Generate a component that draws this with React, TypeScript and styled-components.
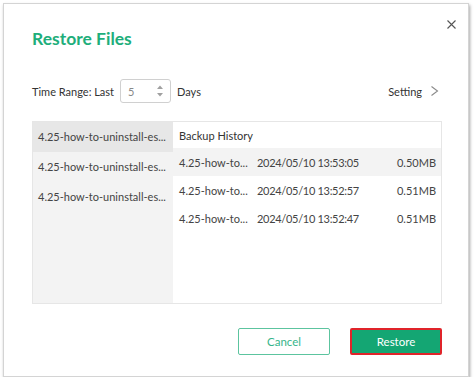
import { FC } from "react";
import styled, { createGlobalStyle } from "styled-components";

const GlobalStyle = createGlobalStyle`
  html, body {
    margin: 0;
    padding: 0;
    background: #ffffff;
  }
  body {
    font-family: Lato, "Open Sans", sans-serif;
    color: #333333;
  }
`;

type BackupRow = {
  name: string;
  date: string;
  size: string;
};

const sources = [
  "4.25-how-to-uninstall-es...",
  "4.25-how-to-uninstall-es...",
  "4.25-how-to-uninstall-es...",
];

const rows: BackupRow[] = [
  { name: "4.25-how-to...", date: "2024/05/10 13:53:05", size: "0.50MB" },
  { name: "4.25-how-to...", date: "2024/05/10 13:52:57", size: "0.51MB" },
  { name: "4.25-how-to...", date: "2024/05/10 13:52:47", size: "0.51MB" },
];

const App: FC = () => (
  <>
    <GlobalStyle />
    <Dialog>
      <CloseButton aria-label="Close">
        <svg width="9" height="9" viewBox="0 0 9 9">
          <path d="M0.5 0.5 L8.5 8.5 M8.5 0.5 L0.5 8.5" stroke="#555" strokeWidth="1.1" fill="none" />
        </svg>
      </CloseButton>
      <Title>Restore Files</Title>
      <Toolbar>
        <Label>Time Range: Last</Label>
        <NumberBox>
          <NumberValue>5</NumberValue>
          <Spinner>
            <svg width="8" height="16" viewBox="0 0 8 16">
              <path d="M1 6 L4 2.5 L7 6 Z" fill="#a0a0a0" />
              <path d="M1 10 L4 13.5 L7 10 Z" fill="#a0a0a0" />
            </svg>
          </Spinner>
        </NumberBox>
        <Label>Days</Label>
        <SettingLink>
          Setting
          <svg width="9" height="14" viewBox="0 0 9 14">
            <path d="M1.5 2.5 L7.5 7 L1.5 11.5" stroke="#8a8a8a" strokeWidth="1.1" fill="none" />
          </svg>
        </SettingLink>
      </Toolbar>
      <Panels>
        <SourceList>
          {sources.map((src, idx) => (
            <SourceItem key={`src-${idx}`} active={idx === 0}>{src}</SourceItem>
          ))}
        </SourceList>
        <History>
          <HistoryHeader>Backup History</HistoryHeader>
          {rows.map((row, idx) => (
            <HistoryRow key={`row-${idx}`} active={idx === 0}>
              <Cell>{row.name}</Cell>
              <DateCell>{row.date}</DateCell>
              <SizeCell>{row.size}</SizeCell>
            </HistoryRow>
          ))}
        </History>
      </Panels>
      <Footer>
        <Button>Cancel</Button>
        <Button primary>Restore</Button>
      </Footer>
    </Dialog>
  </>
);

export default App;

const Dialog = styled.div`
  position: relative;
  box-sizing: border-box;
  margin: 3px 0 0 3px;
  width: 466px;
  height: 374px;
  background: #ffffff;
  border: 1px solid #d4d4d4;
  box-shadow: 1px 2px 3px rgba(0, 0, 0, 0.35);
  padding: 0 26px 0 28px;
  display: flex;
  flex-direction: column;
`;

const CloseButton = styled.button`
  position: absolute;
  top: 12px;
  right: 9px;
  width: 16px;
  height: 16px;
  padding: 0;
  border: 0;
  background: none;
  display: flex;
  align-items: center;
  justify-content: center;
`;

const Title = styled.h1`
  margin: 22px 0 0;
  font-size: 17.5px;
  line-height: 26px;
  font-weight: 700;
  color: #1eae7b;
`;

const Toolbar = styled.div`
  display: flex;
  align-items: center;
  height: 24px;
  margin-top: 27px;
  font-size: 11px;
`;

const Label = styled.span`
  color: #333333;
`;

const NumberBox = styled.div`
  box-sizing: border-box;
  display: flex;
  align-items: center;
  justify-content: space-between;
  width: 51px;
  height: 24px;
  margin: 0 6px 0 6px;
  padding: 0 6px 0 7px;
  border: 1px solid #d0d0d0;
  border-radius: 3px;
`;

const NumberValue = styled.span`
  color: #888888;
`;

const Spinner = styled.span`
  display: flex;
`;

const SettingLink = styled.span`
  margin-left: auto;
  margin-right: 3px;
  display: flex;
  align-items: center;
  gap: 8px;
  color: #333333;
`;

const Panels = styled.div`
  display: grid;
  grid-template-columns: 140px 1fr;
  height: 181px;
  margin-top: 18px;
  border: 1px solid #e6e6e6;
  font-size: 11px;
`;

const SourceList = styled.div`
  background: #f3f3f3;
  display: flex;
  flex-direction: column;
`;

const SourceItem = styled.div<{ active?: boolean }>`
  height: 30px;
  line-height: 30px;
  padding-left: 5px;
  white-space: nowrap;
  overflow: hidden;
  color: #444444;
  background: ${({ active }) => (active ? "#e7e7e7" : "transparent")};
`;

const History = styled.div`
  display: flex;
  flex-direction: column;
`;

const HistoryHeader = styled.div`
  height: 26px;
  line-height: 28px;
  padding-left: 6px;
  color: #333333;
`;

const HistoryRow = styled.div<{ active?: boolean }>`
  display: grid;
  grid-template-columns: 78px 1fr auto;
  height: 28px;
  align-items: center;
  padding: 0 5px 0 6px;
  color: #444444;
  background: ${({ active }) => (active ? "#f3f3f3" : "transparent")};
`;

const Cell = styled.span`
  white-space: nowrap;
`;

const DateCell = styled(Cell)`
  letter-spacing: -0.3px;
`;

const SizeCell = styled(Cell)`
  text-align: right;
`;

const Footer = styled.div`
  display: flex;
  justify-content: flex-end;
  gap: 20px;
  margin-top: 24px;
`;

const Button = styled.button<{ primary?: boolean }>`
  box-sizing: border-box;
  width: 92px;
  height: 27px;
  font-family: inherit;
  font-size: 11.5px;
  border-radius: 2px;
  cursor: pointer;
  color: ${({ primary }) => (primary ? "#ffffff" : "#35b58a")};
  background: ${({ primary }) => (primary ? "#14a673" : "#ffffff")};
  border: ${({ primary }) => (primary ? "2px solid #e0242a" : "1px solid #5cc49f")};
`;
